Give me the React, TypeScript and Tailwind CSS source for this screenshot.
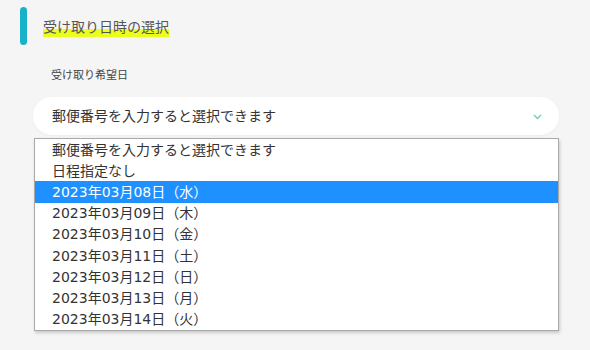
import React from 'react';

const OPTIONS = [
  '郵便番号を入力すると選択できます',
  '日程指定なし',
  '2023年03月08日（水）',
  '2023年03月09日（木）',
  '2023年03月10日（金）',
  '2023年03月11日（土）',
  '2023年03月12日（日）',
  '2023年03月13日（月）',
  '2023年03月14日（火）',
];

const SELECTED = 2;

const App: React.FC = () => {
  return (
    <div
      className="w-[590px] h-[350px] bg-[#f5f5f5] overflow-hidden text-[#333]"
      style={{ fontFamily: '"DejaVu Sans", "Noto Sans CJK JP", sans-serif' }}
    >
      <div className="flex items-center pl-[20px] pt-[7px]">
        <div className="w-[7px] h-[38px] rounded-full bg-[#17b1c9]" />
        <h2 className="ml-[16px] text-[14px] leading-[20px] text-[#555] bg-[linear-gradient(transparent_62%,#eaff1a_62%)] pt-[2px]">
          受け取り日時の選択
        </h2>
      </div>

      <div className="pl-[51px] mt-[24px] text-[11px] leading-[14px] text-[#444]">受け取り希望日</div>

      <div className="relative ml-[33px] w-[526px] mt-[14px]">
        <div className="flex items-center justify-between h-[38px] rounded-full bg-white pl-[19px] pr-[17px] shadow-[0_1px_3px_rgba(0,0,0,0.04)]">
          <span className="text-[14px] leading-[20px] text-[#333]">郵便番号を入力すると選択できます</span>
          <svg width="9" height="6" viewBox="0 0 9 6" className="mt-[2px]">
            <polyline points="1,1 4.5,4.5 8,1" fill="none" stroke="#66d1ad" strokeWidth="1.3" />
          </svg>
        </div>

        <ul className="absolute left-[1px] right-0 top-[41px] bg-white border border-[#a9a9a9] shadow-[1px_2px_3px_rgba(0,0,0,0.18)]">
          {OPTIONS.map((opt, i) => (
            <li
              key={opt}
              className={`h-[21.2px] flex items-center pl-[17px] text-[14px] leading-[20px] ${
                i === SELECTED ? 'bg-[#1e90ff] text-white' : 'text-[#333]'
              }`}
            >
              {opt}
            </li>
          ))}
        </ul>
      </div>
    </div>
  );
};

export default App;
